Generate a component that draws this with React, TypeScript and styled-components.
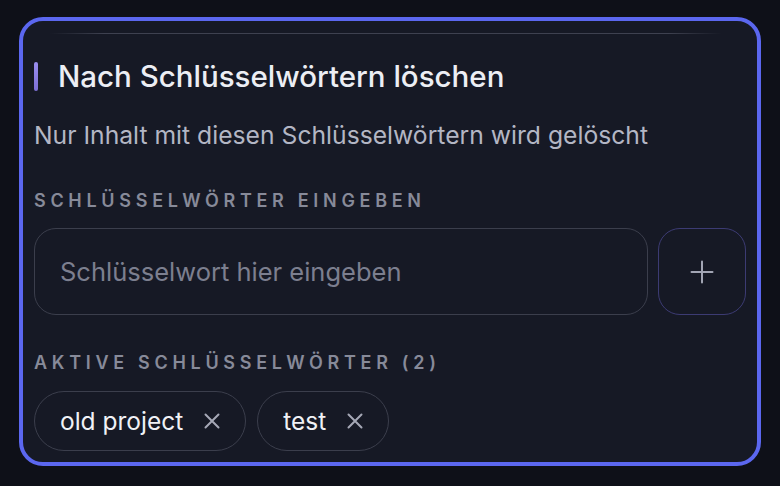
import styled, { createGlobalStyle } from 'styled-components';

const GlobalStyle = createGlobalStyle`
  html, body {
    margin: 0;
    padding: 0;
    background: #0e1018;
  }
  * {
    box-sizing: border-box;
  }
`;

const Page = styled.div`
  padding: 17px 19px 20px;
  font-family: Inter, 'Noto Sans', sans-serif;
`;

const Card = styled.section`
  height: 449px;
  border: 4px solid #5b67ef;
  border-radius: 24px;
  background: #161925;
  padding: 12px 11px 11px;
  display: flex;
  flex-direction: column;
`;

const Divider = styled.div`
  height: 1px;
  margin: 0 24px 0 16px;
  background: linear-gradient(
    90deg,
    rgba(70, 73, 88, 0) 0%,
    #3e4150 8%,
    #3e4150 92%,
    rgba(70, 73, 88, 0) 100%
  );
`;

const TitleRow = styled.div`
  display: flex;
  align-items: center;
  gap: 20px;
  height: 30px;
  margin-top: 27px;
`;

const AccentBar = styled.span`
  width: 4px;
  height: 29px;
  border-radius: 2px;
  background: linear-gradient(180deg, #9a8ef0, #7d6fd6);
`;

const Title = styled.h2`
  margin: 0;
  font-size: 29.5px;
  font-weight: 500;
  color: #eceef4;
  white-space: nowrap;
`;

const Subtitle = styled.p`
  margin: 29px 0 0;
  font-size: 24.7px;
  line-height: 30px;
  color: #b3b6c4;
  white-space: nowrap;
`;

const Label = styled.div<{ $top: number }>`
  margin-top: ${({ $top }) => $top}px;
  font-size: 18px;
  line-height: 20px;
  font-weight: 600;
  letter-spacing: 4.7px;
  text-transform: uppercase;
  color: #878a99;
  white-space: nowrap;
`;

const InputRow = styled.div`
  display: flex;
  gap: 10px;
  margin-top: 17px;
  height: 87px;
`;

const Input = styled.input`
  flex: 1;
  min-width: 0;
  height: 100%;
  border: 1.5px solid #3b3e4c;
  border-radius: 22px;
  background: transparent;
  padding: 0 25px;
  font: 400 25.5px Inter, 'Noto Sans', sans-serif;
  color: #e8e9ef;
  outline: none;

  &::placeholder {
    font-size: 25.5px;
    color: #7c7f8f;
  }
`;

const AddButton = styled.button`
  width: 88px;
  height: 100%;
  border: 1.5px solid #3c3b73;
  border-radius: 22px;
  background: transparent;
  display: flex;
  align-items: center;
  justify-content: center;
  color: #a2a5b4;
  padding: 0;
`;

const ChipList = styled.div`
  display: flex;
  gap: 11px;
  margin-top: 18px;
`;

const Chip = styled.div`
  height: 60px;
  display: flex;
  align-items: center;
  gap: 21px;
  padding: 0 25px 0 25px;
  border: 1.5px solid #3b3e4c;
  border-radius: 30px;
  font-size: 24.5px;
  color: #f0f1f6;
`;

const ChipRemove = styled.span`
  display: flex;
  color: #a5a8b6;
`;

const PlusIcon = () => (
  <svg width="24" height="24" viewBox="0 0 24 24" fill="none">
    <path d="M12 1.5v21M1.5 12h21" stroke="currentColor" strokeWidth="2" strokeLinecap="round" />
  </svg>
);

const CloseIcon = () => (
  <svg width="16" height="16" viewBox="0 0 16 16" fill="none">
    <path d="M1.5 1.5l13 13M14.5 1.5l-13 13" stroke="currentColor" strokeWidth="2" strokeLinecap="round" />
  </svg>
);

const keywords = ['old project', 'test'];

export default function App() {
  return (
    <>
      <GlobalStyle />
      <Page>
        <Card>
          <Divider />
          <TitleRow>
            <AccentBar />
            <Title>Nach Schlüsselwörtern löschen</Title>
          </TitleRow>
          <Subtitle>Nur Inhalt mit diesen Schlüsselwörtern wird gelöscht</Subtitle>

          <Label $top={41}>Schlüsselwörter eingeben</Label>
          <InputRow>
            <Input placeholder="Schlüsselwort hier eingeben" />
            <AddButton aria-label="Hinzufügen">
              <PlusIcon />
            </AddButton>
          </InputRow>

          <Label $top={38}>Aktive Schlüsselwörter ({keywords.length})</Label>
          <ChipList>
            {keywords.map((k) => (
              <Chip key={k}>
                {k}
                <ChipRemove>
                  <CloseIcon />
                </ChipRemove>
              </Chip>
            ))}
          </ChipList>
        </Card>
      </Page>
    </>
  );
}
